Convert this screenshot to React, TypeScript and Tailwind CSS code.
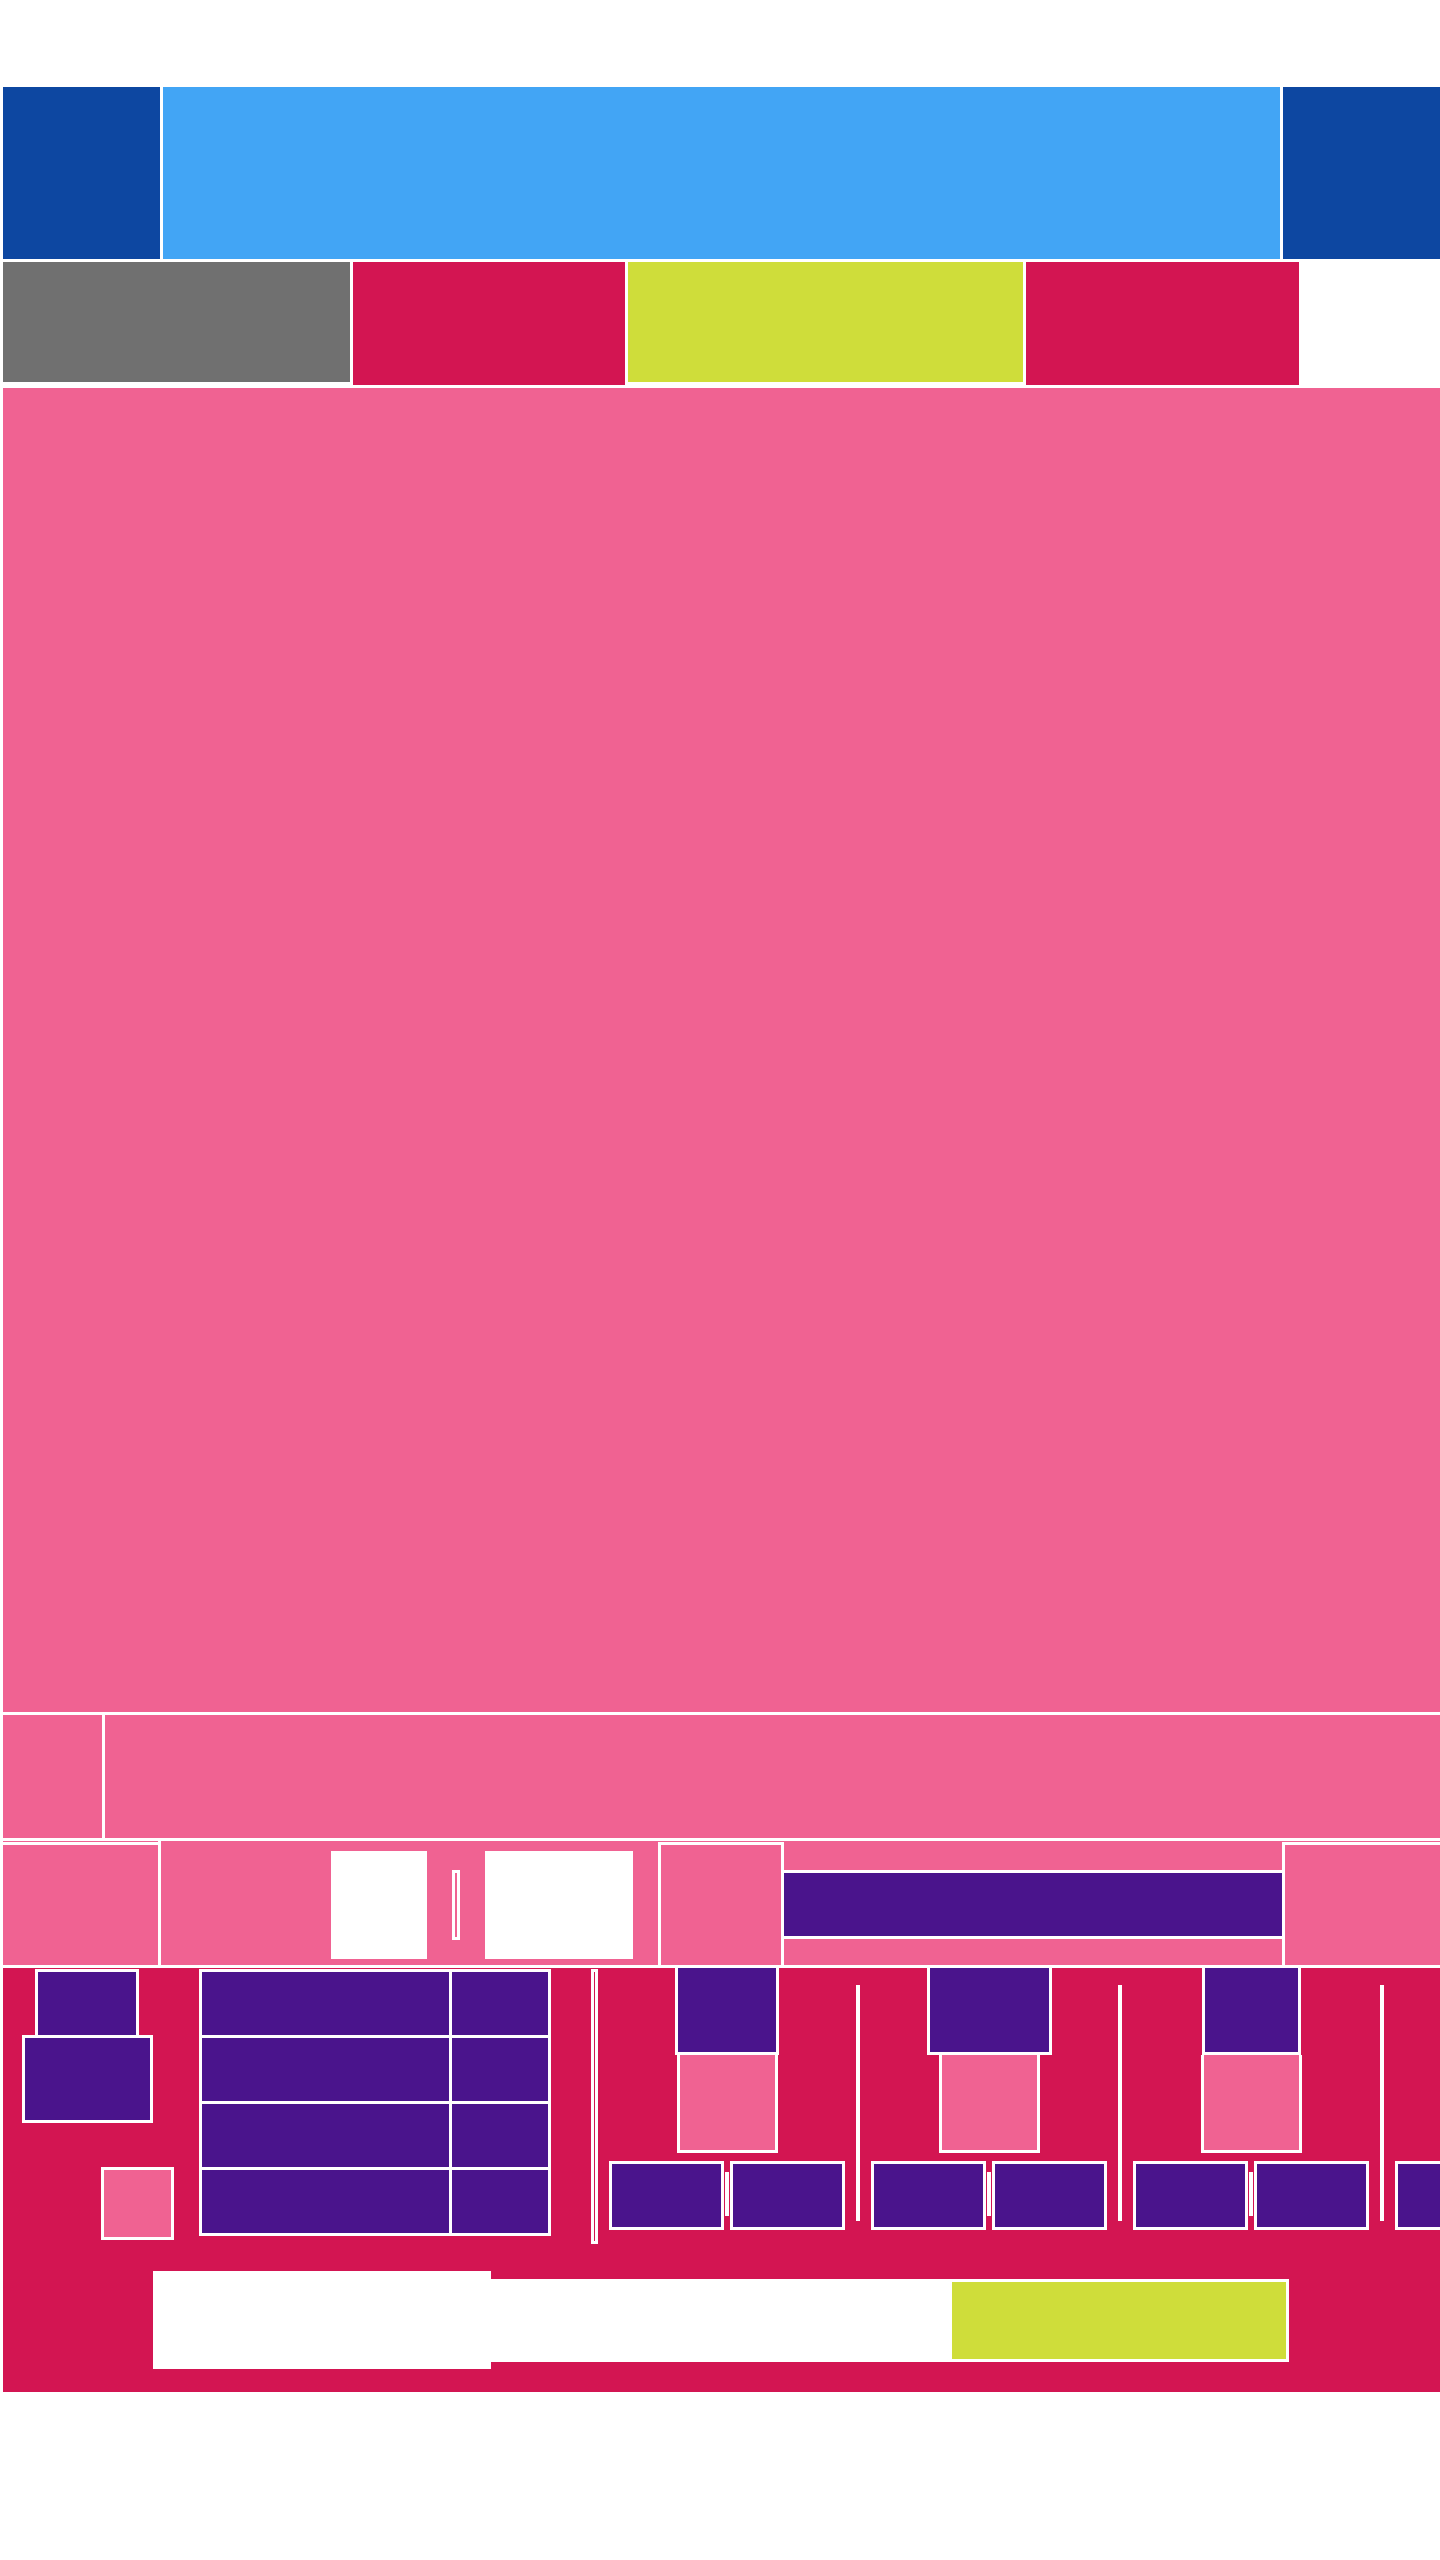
const PINK = 'bg-[#f06292]'
const PURPLE = 'bg-[#4a148c]'

type Group = { topWidth: string }

const groups: Group[] = [
  { topWidth: 'w-[104px]' },
  { topWidth: 'w-[125px]' },
  { topWidth: 'w-[99px]' },
  { topWidth: 'w-[104px]' },
]

const SlotGroup = ({ topWidth }: Group) => (
  <div className="flex shrink-0">
    <div className="flex w-[258px] flex-col items-center">
      <div className={`${topWidth} h-[87px] border-x-[3px] border-b-[3px] border-white ${PURPLE}`} />
      <div className={`h-[98px] w-[101px] border-[3px] border-t-0 border-white ${PINK}`} />
      <div className="mt-[8px] flex w-full px-[11px]">
        <div className={`h-[69px] w-[115px] border-[3px] border-white ${PURPLE}`} />
        <div className="flex w-[6px] justify-center pt-[11px]">
          <div className="h-[44px] w-[4px] bg-white" />
        </div>
        <div className={`h-[69px] w-[115px] border-[3px] border-white ${PURPLE}`} />
      </div>
    </div>
    <div className="mt-[17px] h-[236px] w-[4px] bg-white" />
  </div>
)

const TableBlock = () => (
  <div className="mt-px grid w-[352px] shrink-0 grid-cols-[247px_96px] gap-[3px] bg-white p-[3px]">
    {Array.from({ length: 8 }).map((_, i) => (
      <div key={i} className={`h-[63px] ${PURPLE}`} />
    ))}
  </div>
)

export default function App() {
  return (
    <div className="min-h-[2560px] w-[1440px] overflow-hidden bg-white pl-[3px] pt-[87px]">
      {/* header */}
      <div className="flex h-[172px] gap-[3px]">
        <div className="w-[157px] bg-[#0d47a1]" />
        <div className="flex-1 bg-[#42a5f5]" />
        <div className="w-[157px] bg-[#0d47a1]" />
      </div>

      {/* nav tabs */}
      <div className="mt-[3px] flex items-start gap-[3px]">
        <div className="h-[120px] w-[347px] bg-[#707070]" />
        <div className="h-[123px] w-[272px] bg-[#d31552]" />
        <div className="h-[120px] w-[395px] bg-[#cfdd3a]" />
        <div className="h-[123px] w-[273px] bg-[#d31552]" />
      </div>

      {/* hero */}
      <div className={`mt-[3px] h-[1324px] ${PINK}`} />

      <div className="mt-[3px] flex h-[123px] gap-[3px]">
        <div className={`w-[99px] ${PINK}`} />
        <div className={`flex-1 ${PINK}`} />
      </div>

      {/* toolbar */}
      <div className="mt-[3px] flex h-[124px]">
        <div className={`w-[155px] pt-px ${PINK}`}>
          <div className="h-full border-t-[3px] border-white" />
        </div>
        <div className={`ml-[3px] flex w-[497px] items-start ${PINK}`}>
          <div className="ml-[170px] mt-[10px] h-[108px] w-[96px] bg-white" />
          <div className="ml-[25px] mt-[29px] h-[70px] w-[8px] border-[3px] border-white" />
          <div className="ml-[25px] mt-[10px] h-[108px] w-[148px] bg-white" />
        </div>
        <div className={`w-[126px] pt-px ${PINK}`}>
          <div className="h-full border-x-[3px] border-t-[3px] border-white" />
        </div>
        <div className={`flex w-[498px] flex-col ${PINK}`}>
          <div className="h-[29px]" />
          <div className={`h-[69px] border-y-[3px] border-white ${PURPLE}`} />
        </div>
        <div className={`flex-1 pt-px ${PINK}`}>
          <div className="h-full border-l-[3px] border-t-[3px] border-white" />
        </div>
      </div>

      {/* footer panel */}
      <div className="mt-[3px] h-[424px] overflow-hidden bg-[#d31552]">
        <div className="flex items-start">
          <div className="flex w-[196px] shrink-0 flex-col">
            <div className={`ml-[32px] mt-px h-[66px] w-[104px] border-x-[3px] border-t-[3px] border-white ${PURPLE}`} />
            <div className={`ml-[19px] h-[88px] w-[131px] border-[3px] border-white ${PURPLE}`} />
            <div className={`ml-[98px] mt-[44px] h-[73px] w-[73px] border-[3px] border-white ${PINK}`} />
          </div>
          <TableBlock />
          <div className="ml-[40px] mt-px h-[275px] w-[7px] shrink-0 border-[3px] border-white" />
          {groups.map((g, i) => (
            <SlotGroup key={i} {...g} />
          ))}
        </div>

        <div className="mt-[27px] flex items-center">
          <div className="ml-[150px] h-[98px] w-[338px] bg-white" />
          <div className="flex h-[83px] w-[798px] justify-end border-[3px] border-white bg-white">
            <div className="h-full w-[334px] bg-[#cfdd3a]" />
          </div>
        </div>
      </div>
    </div>
  )
}
